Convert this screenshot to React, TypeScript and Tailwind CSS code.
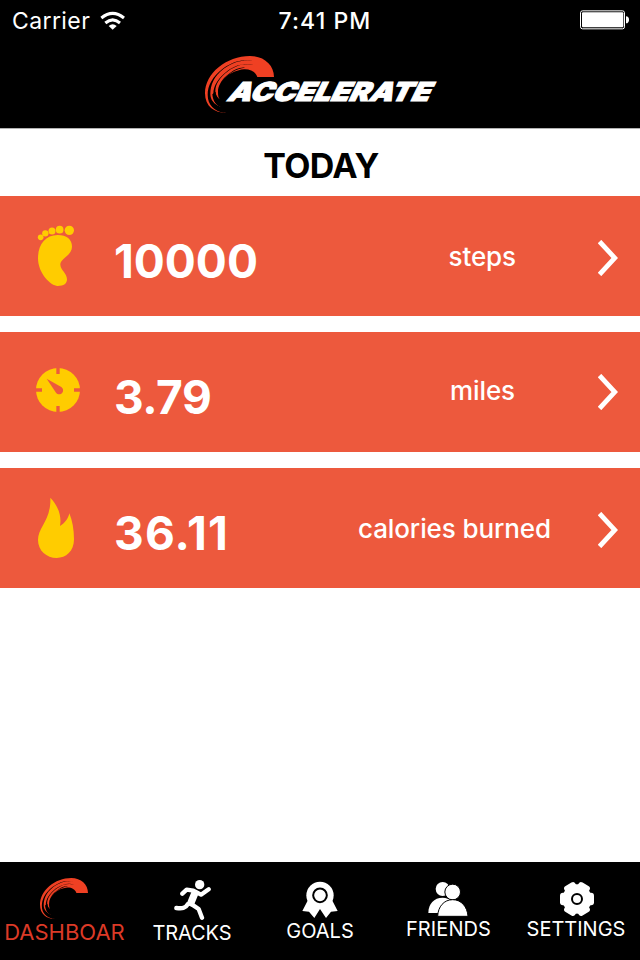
import { useState } from 'react';

const rows = [
  { icon: <FootIcon />, value: '10000', valueClass: '', unit: 'steps', unitClass: 'mr-[82px]', arrowClass: 'mt-1' },
  { icon: <GaugeIcon />, value: '3.79', valueClass: 'tracking-[-0.4px]', unit: 'miles', unitClass: 'mr-[83px] pb-[3px]', arrowClass: '' },
  { icon: <FlameIcon />, value: '36.11', valueClass: 'tracking-[1.2px]', unit: 'calories burned', unitClass: 'mr-[47px]', arrowClass: 'mt-1' },
];

const tabs = [
  { name: 'DASHBOAR', icon: <Swoosh className="h-[41px] w-12" />, className: 'pt-4', labelClass: 'ml-px text-[22px] leading-[26px]' },
  { name: 'TRACKS', icon: <RunnerIcon />, className: 'pt-[17px]', labelClass: 'text-[20px] leading-[24px] tracking-[-0.1px]' },
  { name: 'GOALS', icon: <MedalIcon />, className: 'pt-[19px]', labelClass: 'text-[20px] leading-[24px]' },
  { name: 'FRIENDS', icon: <FriendsIcon />, className: 'pt-[19px]', labelClass: 'ml-px text-[20px] leading-[24px] tracking-[0.1px]' },
  { name: 'SETTINGS', icon: <GearIcon />, className: 'pt-[19px]', labelClass: 'text-[20px] leading-[24px]' },
];

function Swoosh({ className }: { className: string }) {
  return (
    <svg className={className} viewBox="30 33 207 171" preserveAspectRatio="none">
      <path fill="#ef4023" d="M95 204C57 204 30 184 30 145C30 85 94 33 165 33C207 33 237 60 237 96H187C183 80 164 72 147 73C105 77 69 108 69 141C69 151 70 158 74 163C70 161 62 152 62 140L52 148C54 169 64 181 76 185L72 196C78 201 85 203 95 204Z" />
      <g fill="#000">
        <path d="M176 48.500C150 42 118 46 85 70C51 95 38 124 38 149C38 180 58 198 86 203L90 190L76 185C57 178 46 164 46 147C46 121 56 95 86 71.500C119 47.500 150 43.500 176 48.500Z" />
        <path d="M178 60.500C156 53 128 56 98 77C70 98 55 122 55 146C55 168 64 180 76 185L84 175L72 162C65 156 61 149 61 139C61 117 74 97 99 78.500C129 57.500 154 55 178 60.500Z" />
        <path d="M150 68C134 66 120 73 106 83C92 93 82 103 76 114C84 103 95 93 107 84.500C123 73 138 68.500 150 68Z" />
      </g>
    </svg>
  );
}

function FootIcon() {
  return (
    <svg className="ml-9 h-[62px] w-10" viewBox="48 45 120 186" fill="#ffcc00">
      <circle cx="62" cy="82" r="8.5" />
      <circle cx="76" cy="70" r="9.5" />
      <circle cx="96" cy="63" r="10.5" />
      <circle cx="119" cy="59" r="11.5" />
      <circle cx="148" cy="61" r="14" />
      <path d="M113 75C140 75 156 88 156 110C156 136 120 146 121 164C122 180 141 190 141 208C141 221 132 228 113 228C92 228 54 190 54 145C54 105 75 75 113 75Z" />
    </svg>
  );
}

function GaugeIcon() {
  return (
    <svg className="ml-9 -mt-1 size-11" viewBox="48 69 132 132">
      <circle cx="114" cy="135" r="66" fill="#ffcc00" />
      <path d="M114 69V87M114 183V201M48 135H66M162 135H180" stroke="#ed593d" strokeWidth="10" />
      <path d="M80 101L124 126C130 130 131 138 127 143C122 149 113 149 108 143Z" fill="#ed593d" />
    </svg>
  );
}

function FlameIcon() {
  return (
    <svg className="mb-0.5 ml-[38px] h-[61px] w-9" viewBox="54 51 108 183" fill="#ffcc00">
      <path d="M91 53C112 75 126 105 120 138C135 128 144 118 148 100C157 122 162 148 162 178C162 214 138 234 110 234C80 234 54 212 54 180C54 141 94 120 91 53Z" />
    </svg>
  );
}

function RunnerIcon() {
  return (
    <svg className="ml-0.5 h-[42px] w-[38px]" viewBox="522 57 114 126" fill="none" stroke="#fff" strokeLinecap="round" strokeLinejoin="round">
      <circle cx="599" cy="74" r="14" fill="#fff" stroke="none" />
      <path strokeWidth="13" d="M547 101L560 89L580 92L603 104L626 88M529 144C547 146 556 145 563 133M572 131L596 147L606 173" />
      <path strokeWidth="22" d="M584 101L573 128" />
    </svg>
  );
}

function MedalIcon() {
  return (
    <svg className="h-[38px] w-9" viewBox="156 63 108 114" fill="#fff">
      <path d="M174 120L157 153L177 155L193 174L210 147L228 174L243 155L263 153L246 120Z" />
      <circle cx="210" cy="106" r="41" />
      <circle cx="210" cy="106" r="20.5" stroke="#000" strokeWidth="6" />
    </svg>
  );
}

function FriendsIcon() {
  return (
    <svg className="h-9 w-10" viewBox="533 63 120 108" fill="#fff">
      <circle cx="577" cy="87" r="21" />
      <path d="M534 159C534 131 551 113 577 113C588 113 598 117 604 122L580 159Z" />
      <circle cx="607" cy="96" r="23.5" stroke="#000" strokeWidth="3" />
      <path d="M562 169C563 140 581 119 607 119C633 119 651 140 653 169Z" stroke="#000" strokeWidth="3" />
    </svg>
  );
}

function GearIcon() {
  return (
    <svg className="ml-0.5 h-9 w-9" viewBox="177 63 108 108" fill="#fff">
      <circle cx="231" cy="117" r="44" />
      {[0, 60, 120].map((deg) => (
        <rect key={deg} x="180" y="98" width="102" height="38" rx="9" transform={`rotate(${deg} 231 117)`} />
      ))}
      <circle cx="231" cy="117" r="15" stroke="#000" strokeWidth="6" />
    </svg>
  );
}

function StatusBar() {
  return (
    <div className="grid h-10 grid-cols-3 items-center pt-0.5 text-[23px] text-white">
      <div className="flex items-center gap-2.5 pl-3">
        <span className="tracking-[0.4px]">Carrier</span>
        <svg className="-mt-0.5 h-[19px] w-[26px]" viewBox="300 31 78 57" fill="none" stroke="#fff" strokeWidth="9">
          <path d="M304 52Q338 24 372 52M316 67Q338 48 360 67" />
          <path d="M326 76Q338 66 350 76L338 87Z" fill="#fff" stroke="none" />
        </svg>
      </div>
      <span className="pl-2.5 text-center font-medium tracking-[1.1px]">7:41 PM</span>
      <svg className="-mt-0.5 mr-2.5 h-5 w-[50px] justify-self-end" viewBox="120 32 150 60">
        <rect x="121.500" y="34.500" width="132" height="54" rx="6" fill="none" stroke="#fff" strokeWidth="3" />
        <rect x="126" y="39" width="124" height="45" rx="3" fill="#fff" />
        <path d="M258 51C264 51 267 55 267 61C267 67 264 72 258 72Z" fill="#fff" />
      </svg>
    </div>
  );
}

export default function App() {
  const [active, setActive] = useState('DASHBOAR');

  return (
    <div className="flex h-[960px] w-[640px] flex-col overflow-hidden bg-white font-['Inter','Liberation_Sans',sans-serif]">
      <header className="h-[129px] border-b border-[#b2b2b2] bg-black">
        <StatusBar />
        <div className="relative ml-[205px] mt-4 h-[57px] w-[240px]">
          <Swoosh className="h-[57px] w-[69px]" />
          <svg className="absolute left-5 top-4 h-10 w-[220px] overflow-visible" viewBox="0 0 220 40">
            <text
              transform="translate(1 28.500) skewX(-26)"
              textLength="202"
              lengthAdjust="spacingAndGlyphs"
              fill="#fff"
              stroke="#fff"
              strokeWidth="1"
              fontSize="26"
              fontWeight="900"
            >
              ACCELERATE
            </text>
          </svg>
        </div>
      </header>

      <main className="flex-1">
        <h1 className="h-[67px] pl-0.5 pt-4 text-center text-[34px] font-bold leading-[42px] tracking-[-0.6px]">TODAY</h1>
        <div className="flex flex-col gap-4">
          {rows.map((row) => (
            <button key={row.unit} className="flex h-[120px] w-full items-center bg-[#ed593d] pr-[22px] text-white">
              <div className="w-[114px]">{row.icon}</div>
              <span className={`flex-1 pt-2.5 text-left text-[46px] font-bold ${row.valueClass}`}>{row.value}</span>
              <span className={`text-[26px] font-medium tracking-[-0.1px] ${row.unitClass}`}>{row.unit}</span>
              <svg className={`h-9 w-5 ${row.arrowClass}`} viewBox="0 0 20 36" fill="none" stroke="#fff" strokeWidth="4.8">
                <path d="M1.500 1.500L16.800 18L1.500 34.500" />
              </svg>
            </button>
          ))}
        </div>
      </main>

      <nav className="grid h-[98px] grid-cols-5 bg-black">
        {tabs.map((tab) => (
          <button
            key={tab.name}
            onClick={() => setActive(tab.name)}
            className={`flex flex-col items-center ${tab.className} ${active === tab.name ? 'text-[#dc3a27]' : 'text-white'}`}
          >
            {tab.icon}
            <span className={tab.labelClass}>{tab.name}</span>
          </button>
        ))}
      </nav>
    </div>
  );
}
